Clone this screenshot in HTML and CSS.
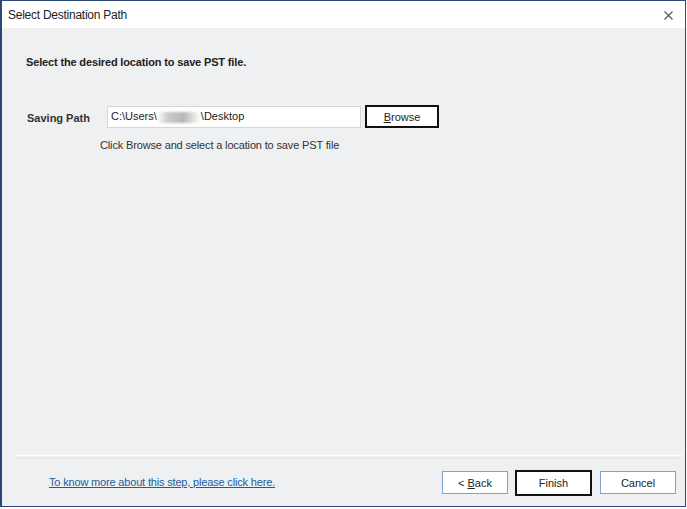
FILE: index.html
```html
<!DOCTYPE html>
<html>
<head>
<meta charset="utf-8">
<link rel="stylesheet" href="styles.css">
</head>
<body>
<div class="window">
  <div class="titlebar">
    <span class="title">Select Destination Path</span>
    <svg class="close" width="9" height="9" viewBox="0 0 9 9" aria-hidden="true">
      <path d="M0.5 0.5 L8.5 8.5 M8.5 0.5 L0.5 8.5" stroke="#555" stroke-width="1.1" fill="none"/>
    </svg>
  </div>
  <div class="main">
    <div class="heading">Select the desired location to save PST file.</div>
    <div class="path-row">
      <span class="label">Saving Path</span>
      <div class="textbox">C:\Users\<span class="blur" aria-hidden="true"></span>\Desktop</div>
      <button class="btn btn-default browse"><u>B</u>rowse</button>
    </div>
    <div class="hint">Click Browse and select a location to save PST file</div>
  </div>
  <div class="separator"></div>
  <div class="footer">
    <a class="help" href="#">To know more about this step, please click here.</a>
    <div class="buttons">
      <button class="btn back">&lt; <u>B</u>ack</button>
      <button class="btn btn-default finish">Finish</button>
      <button class="btn cancel">Cancel</button>
    </div>
  </div>
</div>
</body>
</html>
```
FILE: styles.css
```css
html, body {
  margin: 0;
  padding: 0;
  background: #ffffff;
}
body {
  font-family: "Liberation Sans", Arial, sans-serif;
  font-size: 11px;
  color: #1b1b1b;
}
.window {
  box-sizing: border-box;
  width: 686px;
  height: 507px;
  border: 1px solid #2a4775;
  border-left-width: 2px;
  background: #eef0f1;
  display: flex;
  flex-direction: column;
}
.titlebar {
  height: 27px;
  background: #ffffff;
  display: flex;
  align-items: center;
  justify-content: space-between;
  padding: 0 12px 0 6px;
  flex: none;
}
.title {
  font-size: 12px;
  letter-spacing: -0.25px;
  color: #222;
  padding-top: 1px;
}
.close {
  display: block;
  margin-top: 1px;
}
.main {
  flex: 1;
  padding: 27px 0 0 24px;
}
.heading {
  font-weight: bold;
  font-size: 11px;
  letter-spacing: -0.15px;
  line-height: 14px;
  color: #222;
}
.path-row {
  display: flex;
  align-items: center;
  margin-top: 36px;
}
.label {
  font-weight: bold;
  width: 80px;
  margin-left: 1px;
  color: #333;
  padding-top: 3px;
}
.textbox {
  box-sizing: border-box;
  width: 254px;
  height: 22px;
  background: #fff;
  border: 1px solid #d6d6d6;
  padding: 3px 0 0 3px;
  color: #222;
  white-space: nowrap;
}
.blur {
  display: inline-block;
  width: 44px;
  height: 11px;
  margin-top: 2px;
  vertical-align: top;
  background: linear-gradient(90deg, rgba(200,200,200,0) 0%, rgba(185,185,185,0.75) 25%, rgba(170,170,170,0.85) 60%, rgba(200,200,200,0) 100%);
  filter: blur(1.2px);
}
.btn {
  box-sizing: border-box;
  font-family: inherit;
  font-size: 11px;
  color: #222;
  background: #fff;
  border: 1px solid #7ea4cc;
  padding: 0;
  margin: 0;
}
.btn-default {
  border: 2px solid #111;
}
.browse {
  width: 74px;
  height: 23px;
  margin-left: 4px;
}
.hint {
  margin: 11px 0 0 74px;
  letter-spacing: -0.15px;
  color: #333;
}
.separator {
  margin: 0 3px 0 14px;
  height: 2px;
  border-top: 1px solid #ffffff;
  border-bottom: 1px solid #e3e5e6;
  flex: none;
}
.footer {
  height: 47px;
  display: flex;
  align-items: center;
  justify-content: space-between;
  padding: 0 9px 0 47px;
  flex: none;
}
.help {
  color: #1c5e9c;
  text-decoration: underline;
  font-size: 11px;
  letter-spacing: -0.17px;
  margin-top: -2px;
}
.buttons {
  display: flex;
  align-items: center;
  gap: 7px;
}
.back, .cancel {
  height: 23px;
  width: 66px;
}
.cancel {
  width: 76px;
  margin-left: 1px;
}
.finish {
  width: 77px;
  height: 26px;
}
```
